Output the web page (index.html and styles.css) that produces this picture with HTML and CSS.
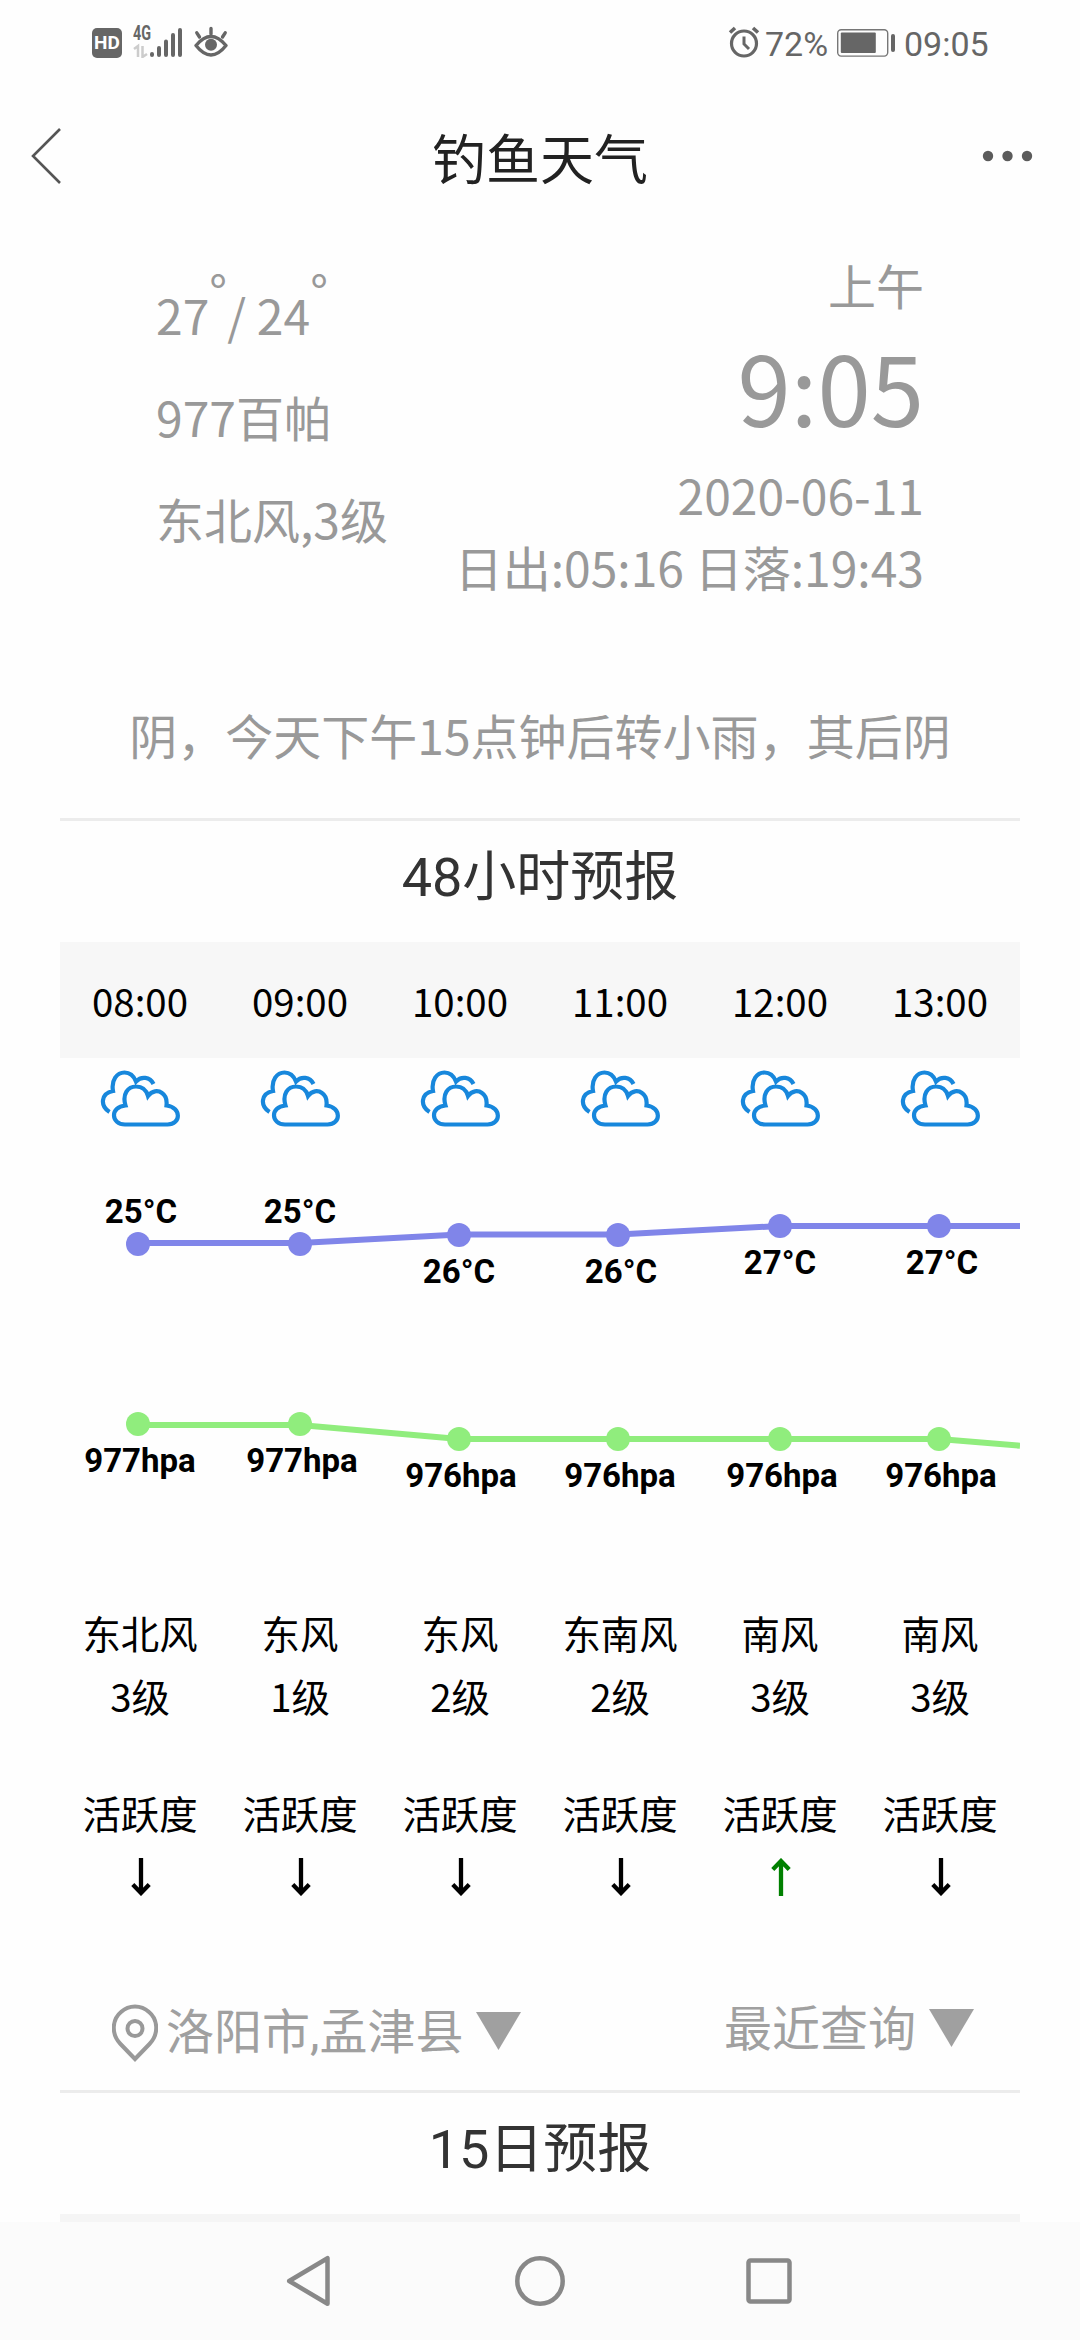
FILE: index.html
```html
<!DOCTYPE html>
<html lang="zh-CN">
<head>
<meta charset="utf-8">
<title>钓鱼天气</title>
<link rel="stylesheet" href="styles.css">
</head>
<body>
<svg class="defs" aria-hidden="true">
  <symbol id="cloud" viewBox="0 0 80 58">
    <path d="M25.500 35.500C22 24 28 16.500 36 16.500C43 16.500 46.500 20.500 48 26C52 20.500 58 20 62 23C66.500 26 67 31 66.500 35.500C82 37.500 81 54.500 67.500 54.500H25C11 54.500 9.500 37 25.500 35.500ZM9.500 42C0 36 .5 23.500 13 21C11 10 17 2.500 24.500 2.500C31 2.500 34 6.500 36 11.500C41 6 50 6.500 53.500 14" fill="none" stroke="#1787dc" stroke-width="4.200" stroke-linejoin="miter"/>
  </symbol>
  <symbol id="down" viewBox="0 0 20 38">
    <path d="M10 0V34M1.800 26.500L10 35L18.200 26.500" fill="none" stroke="currentColor" stroke-width="4.300"/>
  </symbol>
</svg>

<header class="status">
  <div class="status-left">
    <span class="hd">HD</span>
    <div class="network">
      <span class="gen">4G</span>
      <svg class="bars" width="50" height="32" viewBox="0 0 50 32">
        <path d="M1 23L5 20V31M9.500 20V31L14 28" fill="none" stroke="#ccc" stroke-width="2.500"/>
        <path d="M19 29V28M26 29V22M33 29V15.500M40 29V9M47 29V4" stroke="#666" stroke-width="4" stroke-linecap="round"/>
      </svg>
    </div>
    <svg class="eye" width="34" height="32" viewBox="0 0 34 32">
      <path d="M2 19.500Q17 1.500 32 19.500Q17 38.500 2 19.500Z" fill="none" stroke="#666" stroke-width="3.400" stroke-linejoin="round"/>
      <path d="M17 8V2.500M5.500 11L2.800 6.800M28.500 11L31.200 6.800" stroke="#666" stroke-width="3.400" stroke-linecap="round"/>
      <circle cx="17" cy="18.700" r="6" fill="#666"/>
    </svg>
  </div>
  <div class="status-right">
    <svg width="32" height="32" viewBox="0 0 32 32" fill="none" stroke="#666">
      <circle cx="16" cy="17.500" r="12.500" stroke-width="3.200"/>
      <path d="M16 10.500V18L21 23" stroke-width="3"/>
      <path d="M2 6.500L7 2M30 6.500L25 2" stroke-width="3.600"/>
    </svg>
    <span class="percent">72%</span>
    <svg class="battery" width="58" height="28" viewBox="0 0 58 28">
      <rect x=".7" y=".7" width="50" height="26.400" rx="3.500" fill="none" stroke="#777" stroke-width="1.400"/>
      <rect x="3.800" y="3.500" width="35" height="20.500" rx="1" fill="#666"/>
      <rect x="54" y="5" width="4" height="18" rx="2" fill="#666"/>
    </svg>
    <span class="clock">09:05</span>
  </div>
</header>

<nav class="titlebar">
  <svg width="30" height="56" viewBox="0 0 30 56"><path d="M29 1L2 28L29 55" fill="none" stroke="#555" stroke-width="2.600"/></svg>
  <h1>钓鱼天气</h1>
  <svg width="52" height="12" viewBox="0 0 52 12" fill="#5b5b5b"><circle cx="6" cy="6" r="5.200"/><circle cx="25.500" cy="6" r="5.200"/><circle cx="45" cy="6" r="5.200"/></svg>
</nav>

<main>
  <section class="info">
    <div class="now">
      <p>27<span class="deg">°</span>/ 24<span class="deg">°</span></p>
      <p>977百帕</p>
      <p>东北风,3级</p>
    </div>
    <div class="when">
      <p class="period">上午</p>
      <p class="time">9:05</p>
      <p>2020-06-11</p>
      <p>日出:05:16 日落:19:43</p>
    </div>
  </section>
  <p class="summary">阴，今天下午15点钟后转小雨，其后阴</p>

  <section class="forecast">
    <h2>48小时预报</h2>
    <div class="row hours"><span>08:00</span><span>09:00</span><span>10:00</span><span>11:00</span><span>12:00</span><span>13:00</span></div>
    <div class="row clouds">
      <svg><use href="#cloud"/></svg><svg><use href="#cloud"/></svg><svg><use href="#cloud"/></svg><svg><use href="#cloud"/></svg><svg><use href="#cloud"/></svg><svg><use href="#cloud"/></svg>
    </div>
    <svg class="chart" width="960" height="440" viewBox="60 1140 960 440">
      <g class="temp">
        <polyline points="138,1243 300,1243 459,1234.500 618,1234.500 780,1226 939,1226 1020,1226"/>
        <circle cx="138" cy="1244" r="12"/><circle cx="300" cy="1244" r="12"/><circle cx="459" cy="1235" r="12"/><circle cx="618" cy="1235" r="12"/><circle cx="780" cy="1226" r="12"/><circle cx="939" cy="1226" r="12"/>
      </g>
      <g class="pressure">
        <polyline points="138,1425 300,1425 459,1439 618,1439 780,1439 939,1439 1020,1445.700"/>
        <circle cx="138" cy="1424" r="12"/><circle cx="300" cy="1424" r="12"/><circle cx="459" cy="1439" r="12"/><circle cx="618" cy="1439" r="12"/><circle cx="780" cy="1439" r="12"/><circle cx="939" cy="1439" r="12"/>
      </g>
      <g class="labels">
        <text x="141" y="1222.500">25°C</text><text x="300" y="1222.500">25°C</text><text x="459" y="1283">26°C</text><text x="621" y="1283">26°C</text><text x="780" y="1274">27°C</text><text x="942" y="1274">27°C</text>
        <text x="140" y="1472">977hpa</text><text x="302" y="1472">977hpa</text><text x="461" y="1487">976hpa</text><text x="620" y="1487">976hpa</text><text x="782" y="1487">976hpa</text><text x="941" y="1487">976hpa</text>
      </g>
    </svg>
    <div class="row wind"><span>东北风<br>3级</span><span>东风<br>1级</span><span>东风<br>2级</span><span>东南风<br>2级</span><span>南风<br>3级</span><span>南风<br>3级</span></div>
    <div class="row activity">
      <span>活跃度<svg><use href="#down"/></svg></span><span>活跃度<svg><use href="#down"/></svg></span><span>活跃度<svg><use href="#down"/></svg></span><span>活跃度<svg><use href="#down"/></svg></span><span>活跃度<svg class="up"><use href="#down"/></svg></span><span>活跃度<svg><use href="#down"/></svg></span>
    </div>
  </section>

  <section class="pickers">
    <div class="place">
      <svg width="46" height="58" viewBox="0 0 46 58" fill="none" stroke="#999" stroke-width="4"><path d="M23 55L8.500 40C-1.500 29.500 .5 15 9 8C17 .5 29 .5 37 8C45.500 15 47.500 29.500 37.500 40Z"/><circle cx="23" cy="24.500" r="7.500"/></svg>
      <span>洛阳市,孟津县</span>
      <svg class="tri" width="45" height="38" viewBox="0 0 45 38"><path d="M0 0H45L22.500 38Z" fill="#a0a0a0"/></svg>
    </div>
    <div class="recent">
      <span>最近查询</span>
      <svg class="tri" width="45" height="38" viewBox="0 0 45 38"><path d="M0 0H45L22.500 38Z" fill="#a0a0a0"/></svg>
    </div>
  </section>

  <section class="forecast">
    <h2>15日预报</h2>
    <div class="next"></div>
  </section>
</main>

<footer class="system">
  <svg width="44" height="52" viewBox="0 0 44 52"><path d="M41.500 3.200V48.800L3.200 26Z"/></svg>
  <svg class="home" width="50" height="50" viewBox="0 0 50 50"><circle cx="25" cy="25" r="22.700"/></svg>
  <svg width="46" height="46" viewBox="0 0 46 46"><rect x="2.500" y="2.500" width="41" height="41" rx="2"/></svg>
</footer>
</body>
</html>
```
FILE: styles.css
```css
* { margin: 0; padding: 0; box-sizing: border-box; }
body {
  width: 1080px;
  height: 2340px;
  overflow: hidden;
  display: flex;
  flex-direction: column;
  background: #fefefe;
  font-family: "Noto Sans CJK SC", sans-serif;
}
svg { display: block; flex: none; }
.defs { display: none; }

.status {
  height: 84px;
  padding: 0 91px 0 92px;
  display: flex;
  justify-content: space-between;
  font-family: Roboto, sans-serif;
  color: #666;
}
.status-left, .status-right { display: flex; align-items: center; height: 84px; }
.hd {
  width: 30px;
  height: 30px;
  margin-top: 2px;
  border-radius: 5px;
  background: #666;
  color: #fff;
  font: 700 19px/30px Roboto, sans-serif;
  text-align: center;
}
.network { display: grid; margin-left: 11px; height: 32px; }
.network > * { grid-area: 1 / 1; }
.gen { font: 700 20px/15px Roboto, sans-serif; transform: scaleX(.72); transform-origin: left; height: 16px; }
.eye { margin-left: 11px; }
.percent, .clock { font-size: 34px; font-weight: 400; line-height: 40px; margin-top: 3px; }
.percent { margin-left: 5px; width: 63px; }
.battery { margin: 1px 9px 0 9px; }
.clock { width: 85px; }

.titlebar {
  height: 144px;
  padding: 0 46px 0 31px;
  display: grid;
  grid-template-columns: 30px 1fr 52px;
  align-items: center;
}
.titlebar h1 { font-size: 54px; font-weight: 400; line-height: 80px; color: #222; text-align: center; padding-left: 37px; margin-top: 2px; }

main { height: 1994px; display: flex; flex-direction: column; padding: 0 60px; }
main > * { flex: none; }
.info {
  height: 470px;
  padding: 20px 96px 0;
  display: flex;
  justify-content: space-between;
  font-size: 48px;
  line-height: 72px;
  color: #999;
  white-space: nowrap;
}
.now { padding-top: 15px; line-height: 102px; }
.deg { display: inline-block; width: 18px; line-height: 0; vertical-align: 24px; }
.when { text-align: right; }
.period { height: 66px; }
.time { font-size: 96px; line-height: 144px; }
.summary { height: 120px; font-size: 48px; line-height: 72px; color: #999; text-align: center; white-space: nowrap; }

.forecast { border-top: 3px solid #ececec; }
.forecast h2 {
  height: 121px;
  font: 400 54px/113px Roboto, "Noto Sans CJK SC", sans-serif;
  color: #333;
  text-align: center;
}
.row { display: grid; grid-template-columns: repeat(6, 160px); text-align: center; font-size: 38.4px; line-height: 63px; color: #000; }
.row.hours { height: 116px; line-height: 116px; background: #f7f7f7; }
.clouds { height: 82px; padding-top: 12px; justify-items: center; }
.clouds svg { width: 80px; height: 58px; }
.chart polyline { fill: none; stroke-width: 6; }
.temp { stroke: #8085e9; fill: #8085e9; }
.pressure { stroke: #90ed7d; fill: #90ed7d; }
.chart circle { stroke: none; }
.labels { font: 700 33px Roboto, sans-serif; text-anchor: middle; }
.wind { height: 201px; padding-top: 21px; }
.activity { height: 179px; }
.activity svg { width: 20px; height: 38px; margin: 14px 69px 0 71px; }
.activity .up { transform: rotate(180deg); color: #008000; }

.pickers {
  height: 130px;
  padding: 40px 46px 0 52px;
  display: flex;
  justify-content: space-between;
  align-items: flex-start;
  font: 400 48px/60px Roboto, "Noto Sans CJK SC", sans-serif;
  color: #a0a0a0;
}
.place, .recent { display: flex; }
.place { padding-top: 3px; }
.place span { margin-left: 8px; }
.place > svg:first-child { margin-top: 1px; }
.tri { margin: 9px 0 0 13px; }
.next { height: 8px; background: #f5f5f5; }

.system {
  height: 118px;
  padding: 0 288px 0 286px;
  display: flex;
  justify-content: space-between;
  align-items: center;
  background: #fbfbfb;
}
.system svg { fill: none; stroke: #888; stroke-width: 4.500; stroke-linejoin: round; }
.system .home { margin-left: 4px; }
```
